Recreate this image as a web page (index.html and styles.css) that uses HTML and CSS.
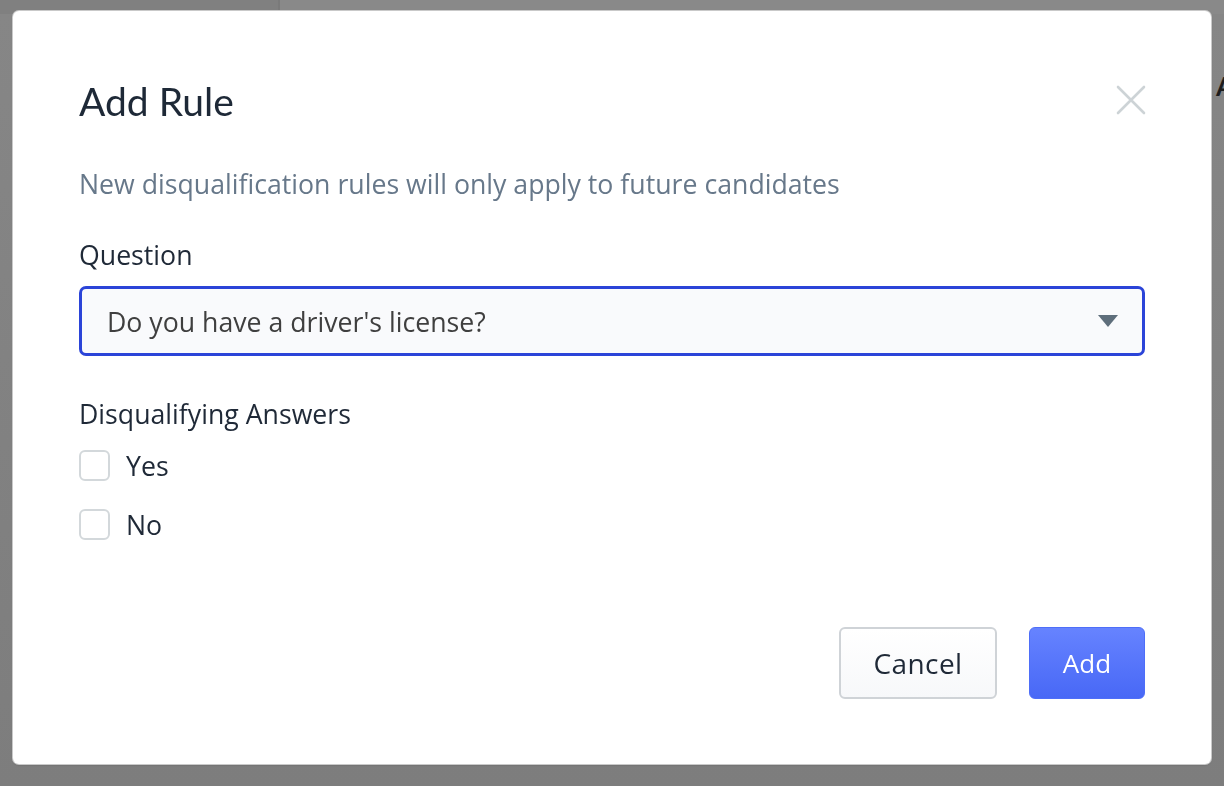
FILE: index.html
```html
<!DOCTYPE html>
<html lang="en">
<head>
<meta charset="utf-8">
<title>Add Rule</title>
<link rel="stylesheet" href="styles.css">
</head>
<body>
<div class="page">
  <div class="page-top">
    <div class="page-top-side"></div>
    <div class="page-top-main"></div>
  </div>
  <div class="page-body">
    <div class="page-heading">A</div>
  </div>
</div>

<div class="overlay">
  <div class="modal" role="dialog" aria-labelledby="modal-title">
    <div class="modal-header">
      <h1 class="modal-title" id="modal-title">Add Rule</h1>
      <button class="modal-close" aria-label="Close">
        <svg width="30" height="30" viewBox="0 0 30 30" aria-hidden="true">
          <path d="M2 2 L28 28 M28 2 L2 28" stroke="#cdd3d6" stroke-width="2.6" stroke-linecap="round" fill="none"/>
        </svg>
      </button>
    </div>
    <p class="modal-note">New disqualification rules will only apply to future candidates</p>

    <label class="field-label">Question</label>
    <div class="select">
      <span class="select-value">Do you have a driver's license?</span>
      <svg class="select-caret" width="20" height="12" viewBox="0 0 20 12" aria-hidden="true">
        <path d="M0 0 H20 L10 12 Z" fill="#5e6e7b"/>
      </svg>
    </div>

    <div class="field-label answers-label">Disqualifying Answers</div>
    <div class="checks">
      <label class="check"><span class="check-box"></span><span class="check-text">Yes</span></label>
      <label class="check"><span class="check-box"></span><span class="check-text">No</span></label>
    </div>

    <div class="modal-actions">
      <button class="btn btn-secondary">Cancel</button>
      <button class="btn btn-primary">Add</button>
    </div>
  </div>
</div>
</body>
</html>
```

FILE: styles.css
```css
* { box-sizing: border-box; }

html, body {
  margin: 0;
  padding: 0;
  width: 1224px;
  height: 786px;
  overflow: hidden;
  font-family: "Open Sans", "Liberation Sans", sans-serif;
}

.page {
  display: flex;
  flex-direction: column;
  height: 786px;
  background: #848484;
}

.page-top {
  display: flex;
  height: 14px;
}

.page-top-side {
  width: 280px;
  background: #808080;
  border-right: 2px solid #7a7a7a;
}

.page-top-main {
  flex: 1;
  background: #898989;
}

.page-body {
  flex: 1;
  position: relative;
  background: linear-gradient(#868686, #7d7d7d);
}

.page-heading {
  position: absolute;
  left: 1216px;
  top: 56px;
  font-family: "Lato", sans-serif;
  font-size: 26px;
  font-weight: 700;
  color: #1d1d1d;
}

.overlay {
  position: fixed;
  inset: 0;
  padding: 11px 13px 22px 13px;
  display: flex;
}

.modal {
  width: 1198px;
  height: 753px;
  background: #ffffff;
  border-radius: 6px;
  box-shadow: 0 0 0 1px #c9c9c9, 0 1px 2px rgba(0,0,0,0.25);
  padding: 66px 66px 65px 66px;
  display: flex;
  flex-direction: column;
  color: #1f2937;
}

.modal-header {
  display: flex;
  justify-content: space-between;
  align-items: center;
  height: 48px;
}

.modal-title {
  margin: 0;
  font-family: "Lato", "Open Sans", sans-serif;
  font-size: 39px;
  line-height: 48px;
  font-weight: 400;
  color: #1e2937;
}

.modal-close {
  border: 0;
  background: none;
  padding: 0;
  margin-right: -1px;
  margin-top: -3px;
  width: 30px;
  height: 30px;
  display: flex;
}

.modal-note {
  margin: 41px 0 0;
  font-size: 26.7px;
  line-height: 36px;
  color: #67788a;
}

.field-label {
  display: block;
  margin-top: 35px;
  font-size: 26.7px;
  line-height: 36px;
  color: #1f2937;
}

.select {
  margin-top: 13px;
  height: 70px;
  border: 3px solid #2b44d8;
  border-radius: 7px;
  background: #f9fafc;
  display: flex;
  align-items: center;
  justify-content: space-between;
  padding: 0 24px 0 25px;
}

.select-value {
  font-size: 26.7px;
  color: #3f3f3f;
}

.answers-label {
  margin-top: 40px;
}

.checks {
  margin-top: 18px;
  display: flex;
  flex-direction: column;
  gap: 29px;
}

.check {
  display: flex;
  align-items: center;
  gap: 16px;
  height: 30px;
}

.check-box {
  width: 31px;
  height: 31px;
  border: 2px solid #d3d8db;
  border-radius: 6px;
  background: #fff;
}

.check-text {
  font-size: 26.7px;
  color: #1f2937;
}

.modal-actions {
  margin-top: auto;
  display: flex;
  justify-content: flex-end;
  gap: 32px;
}

.btn {
  height: 72px;
  border-radius: 6px;
  font-family: inherit;
  font-size: 26px;
  padding: 0;
}

.btn-secondary {
  width: 158px;
  border: 2px solid #cfd3d7;
  background: linear-gradient(#ffffff, #f7f8fa);
  color: #1f2937;
  font-size: 28px;
  letter-spacing: 0.4px;
}

.btn-primary {
  width: 116px;
  border: 1px solid #4e6ef8;
  background: linear-gradient(#6683ff, #4868f6);
  color: #ffffff;
}
```
